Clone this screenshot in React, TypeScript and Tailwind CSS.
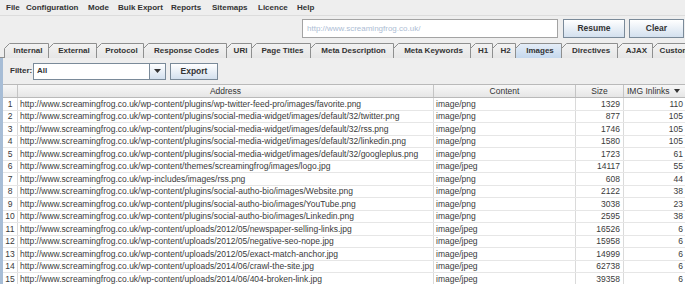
import React from "react";

const rows: [string, string, string, string][] = [
  ["http://www.screamingfrog.co.uk/wp-content/plugins/wp-twitter-feed-pro/images/favorite.png", "image/png", "1329", "110"],
  ["http://www.screamingfrog.co.uk/wp-content/plugins/social-media-widget/images/default/32/twitter.png", "image/png", "877", "105"],
  ["http://www.screamingfrog.co.uk/wp-content/plugins/social-media-widget/images/default/32/rss.png", "image/png", "1746", "105"],
  ["http://www.screamingfrog.co.uk/wp-content/plugins/social-media-widget/images/default/32/linkedin.png", "image/png", "1580", "105"],
  ["http://www.screamingfrog.co.uk/wp-content/plugins/social-media-widget/images/default/32/googleplus.png", "image/png", "1723", "61"],
  ["http://www.screamingfrog.co.uk/wp-content/themes/screamingfrog/images/logo.jpg", "image/jpeg", "14117", "55"],
  ["http://www.screamingfrog.co.uk/wp-includes/images/rss.png", "image/png", "608", "44"],
  ["http://www.screamingfrog.co.uk/wp-content/plugins/social-autho-bio/images/Website.png", "image/png", "2122", "38"],
  ["http://www.screamingfrog.co.uk/wp-content/plugins/social-autho-bio/images/YouTube.png", "image/png", "3038", "23"],
  ["http://www.screamingfrog.co.uk/wp-content/plugins/social-autho-bio/images/Linkedin.png", "image/png", "2595", "38"],
  ["http://www.screamingfrog.co.uk/wp-content/uploads/2012/05/newspaper-selling-links.jpg", "image/jpeg", "16526", "6"],
  ["http://www.screamingfrog.co.uk/wp-content/uploads/2012/05/negative-seo-nope.jpg", "image/jpeg", "15958", "6"],
  ["http://www.screamingfrog.co.uk/wp-content/uploads/2012/05/exact-match-anchor.jpg", "image/jpeg", "14999", "6"],
  ["http://www.screamingfrog.co.uk/wp-content/uploads/2014/06/crawl-the-site.jpg", "image/jpeg", "62738", "6"],
  ["http://www.screamingfrog.co.uk/wp-content/uploads/2014/06/404-broken-link.jpg", "image/jpeg", "39358", "6"],
];

const menus: [string, string][] = [
  ["File", "w-[20px]"],
  ["Configuration", "w-[62px]"],
  ["Mode", "w-[30px]"],
  ["Bulk Export", "w-[53px]"],
  ["Reports", "w-[41px]"],
  ["Sitemaps", "w-[46px]"],
  ["Licence", "w-[39px]"],
  ["Help", "w-[20px]"],
];

const tabs: [string, string, number][] = [
  ["Internal", "w-[45px]", 45],
  ["External", "w-[49px]", 49],
  ["Protocol", "w-[48px]", 48],
  ["Response Codes", "w-[84px]", 84],
  ["URI", "w-[26px]", 26],
  ["Page Titles", "w-[60px]", 60],
  ["Meta Description", "w-[84px]", 84],
  ["Meta Keywords", "w-[78px]", 78],
  ["H1", "w-[23px]", 23],
  ["H2", "w-[24px]", 24],
  ["Images", "w-[47px]", 47],
  ["Directives", "w-[57px]", 57],
  ["AJAX", "w-[36px]", 36],
  ["Custom", "w-[42px]", 42],
];

function Tab({ label, wc, w, selected }: { label: string; wc: string; w: number; selected: boolean }) {
  const gid = selected ? "tabSel" : "tabNorm";
  return (
    <div
      className={`${wc} shrink-0 h-[15px] -mr-px relative flex items-center justify-center pl-[3px] text-[8px] font-bold text-[#333333] whitespace-nowrap ${
        selected ? "z-10" : ""
      }`}
    >
      <svg className="absolute left-0 top-0" width={w} height={15}>
        <defs>
          <linearGradient id={gid} x1="0" y1="0" x2="0" y2="1">
            <stop offset="0" stopColor={selected ? "#e6eef8" : "#f3f3f3"} />
            <stop offset="1" stopColor={selected ? "#c5d8ed" : "#e6e6e6"} />
          </linearGradient>
        </defs>
        <path
          d={`M0.5 15 V5.5 L5.5 0.5 H${w - 0.5} V15`}
          fill={`url(#${gid})`}
          stroke="#8e8f8f"
          strokeWidth="1"
        />
      </svg>
      <span className="relative">{label}</span>
    </div>
  );
}

function Button({ label, w }: { label: string; w: string }) {
  return (
    <div
      className={`${w} h-[19px] shrink-0 flex items-center justify-center border border-[#7a8a99] bg-gradient-to-b from-[#ffffff] to-[#d3e0ee] text-[8.5px] font-bold text-[#333333]`}
    >
      {label}
    </div>
  );
}

export default function App() {
  return (
    <div
      className="w-[685px] h-[284px] overflow-hidden bg-[#eeeeee] flex flex-col text-[#333333]"
      style={{ fontFamily: '"Liberation Sans", Arial, sans-serif' }}
    >
      {/* menu bar */}
      <div className="h-[15px] shrink-0 flex items-center pl-[6px] text-[8px] font-bold text-[#333333]">
        {menus.map(([m, w]) => (
          <div key={m} className={`${w} shrink-0 whitespace-nowrap`}>
            {m}
          </div>
        ))}
      </div>
      {/* toolbar */}
      <div className="h-[28px] shrink-0 flex items-start pt-[3px] pl-[302px] border-t border-[#dcdcdc]">
        <div className="w-[256px] h-[19px] shrink-0 bg-white border border-[#a3a3a3] flex items-center pl-[4px] text-[8px] text-[#adbdd4]">
          http://www.screamingfrog.co.uk/
        </div>
        <div className="ml-[5px]">
          <Button label="Resume" w="w-[62px]" />
        </div>
        <div className="ml-[4px]">
          <Button label="Clear" w="w-[55px]" />
        </div>
      </div>
      {/* tabs */}
      <div className="h-[15px] shrink-0 flex items-end pl-[4px]">
        {tabs.map(([t, wc, w]) => (
          <Tab key={t} label={t} wc={wc} w={w} selected={t === "Images"} />
        ))}
      </div>
      {/* panel */}
      <div className="flex-1 flex border-t border-[#8e8f8f] -mt-px">
        <div className="w-[3px] shrink-0 bg-[#a7bdd6]" />
        <div className="flex-1 flex flex-col min-w-0">
          {/* filter row */}
          <div className="h-[26px] shrink-0 flex items-center">
            <span className="ml-[7px] w-[23px] text-[8px] font-bold">Filter:</span>
            <div className="w-[133px] h-[17px] flex border border-[#7a8a99] bg-white">
              <div className="flex-1 flex items-center pl-[3px] text-[8px] font-bold text-[#333333]">All</div>
              <div className="w-[16px] border-l border-[#7a8a99] bg-gradient-to-b from-[#ffffff] to-[#d3e0ee] flex items-center justify-center">
                <svg width="7" height="4" viewBox="0 0 7 4">
                  <path d="M0 0 H7 L3.5 4 Z" fill="#333333" />
                </svg>
              </div>
            </div>
            <div className="ml-[4px] w-[48px] h-[17px] flex items-center justify-center border border-[#7a8a99] bg-gradient-to-b from-[#ffffff] to-[#d3e0ee] text-[8.5px] font-bold">
              Export
            </div>
          </div>
          {/* table */}
          <div className="flex-1 bg-white flex flex-col text-[8.5px] text-[#3a3a3a] overflow-hidden">
            <div className="h-[14px] shrink-0 flex bg-gradient-to-b from-[#f7f7f7] to-[#e6e6e6] border-t border-b border-[#b9b9b9] text-[#333333]">
              <div className="w-[15px] shrink-0 border-r border-[#c4c4c4]" />
              <div className="w-[416px] shrink-0 border-r border-[#c4c4c4] flex items-center justify-center">Address</div>
              <div className="w-[142px] shrink-0 border-r border-[#c4c4c4] flex items-center justify-center">Content</div>
              <div className="w-[48px] shrink-0 border-r border-[#c4c4c4] flex items-center justify-center">Size</div>
              <div className="w-[62px] shrink-0 flex items-center pl-[3px] gap-[4px] whitespace-nowrap">
                IMG Inlinks
                <svg width="6" height="4" viewBox="0 0 6 4">
                  <path d="M0 0 H6 L3 4 Z" fill="#333333" />
                </svg>
              </div>
            </div>
            {rows.map((r, i) => (
              <div key={i} className="h-[12.5px] shrink-0 flex border-b border-[#e6e6e6] leading-none">
                <div className="w-[15px] shrink-0 border-r border-[#dadada] flex items-center justify-center">{i + 1}</div>
                <div className="w-[416px] shrink-0 border-r border-[#dadada] flex items-center pl-[2px] whitespace-nowrap overflow-hidden">{r[0]}</div>
                <div className="w-[142px] shrink-0 border-r border-[#dadada] flex items-center pl-[2px]">{r[1]}</div>
                <div className="w-[48px] shrink-0 border-r border-[#dadada] flex items-center justify-end pr-[3px]">{r[2]}</div>
                <div className="w-[62px] shrink-0 flex items-center justify-end pr-[3px]">{r[3]}</div>
              </div>
            ))}
          </div>
        </div>
      </div>
    </div>
  );
}
